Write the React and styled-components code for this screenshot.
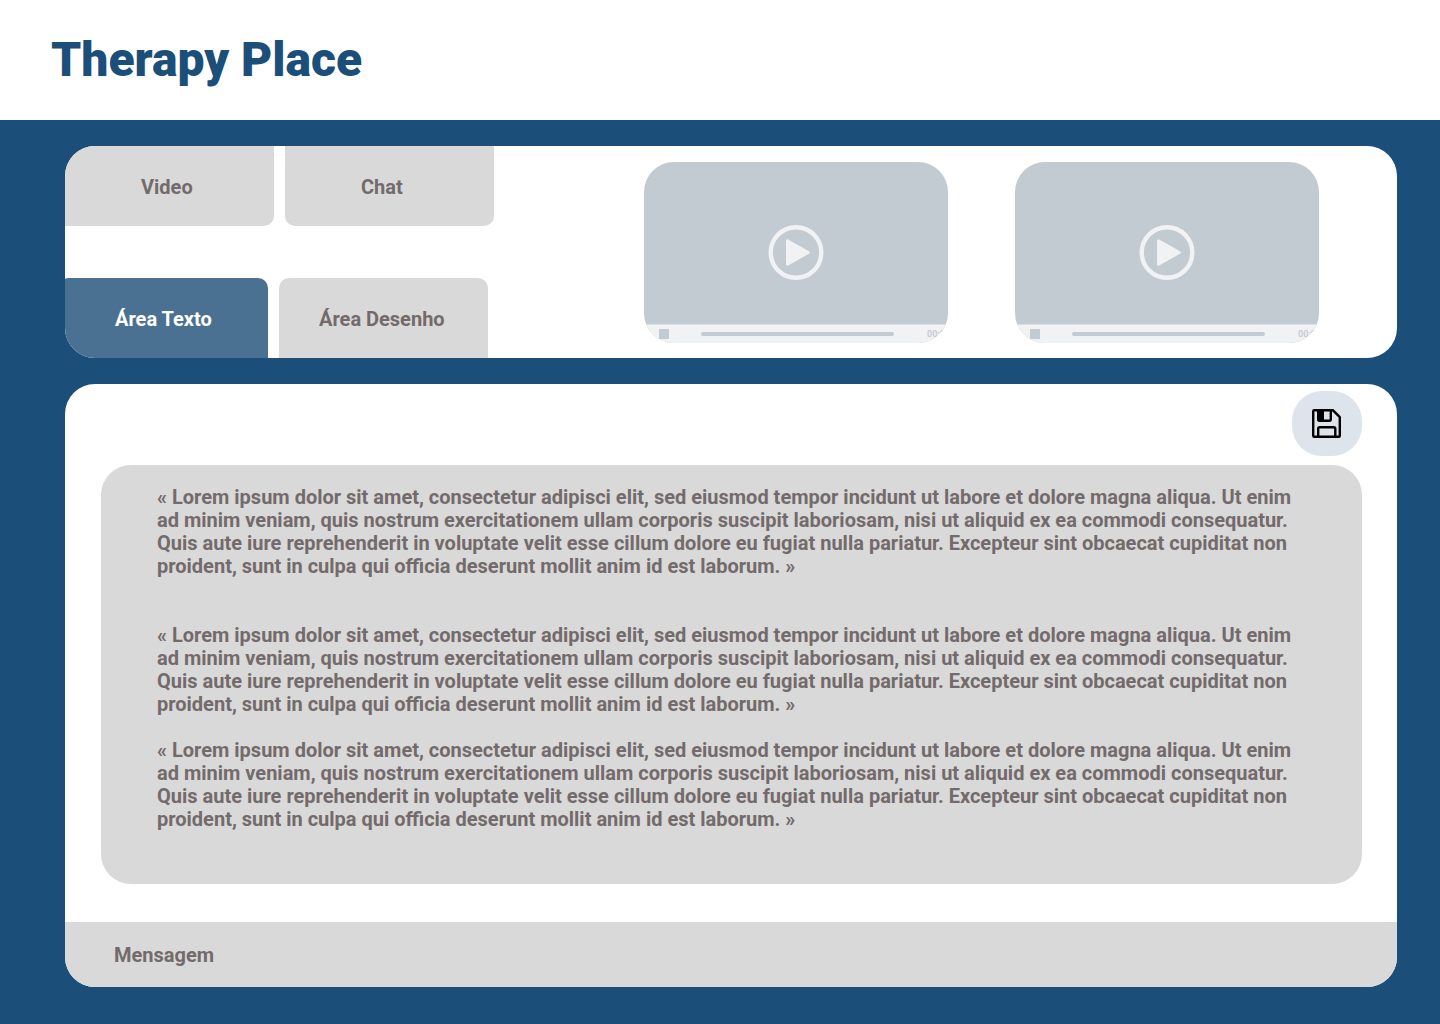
import React from 'react';
import styled, { createGlobalStyle } from 'styled-components';

const color = {
  navy: '#1b4e78',
  active: '#4a7192',
  grey: '#d9d9d9',
  ink: '#736b6b',
  media: '#c2cad2',
  mediaLight: '#f0f2f4',
  save: '#dde4ec',
};

const GlobalStyle = createGlobalStyle`
  *, *::before, *::after { box-sizing: border-box; }
  body {
    margin: 0;
    background: ${color.navy};
    color: ${color.ink};
    font: 700 20px/23px Roboto, "Liberation Sans", sans-serif;
  }
  button, input { font: inherit; color: inherit; border: 0; margin: 0; padding: 0; }
  button { cursor: pointer; }
`;

const Header = styled.header`
  display: flex;
  align-items: center;
  height: 120px;
  padding: 0 51px;
  background: #fff;
`;

const Title = styled.h1`
  margin: 0;
  font-size: 48px;
  line-height: 56px;
  font-weight: 900;
  color: ${color.navy};
`;

const Main = styled.main`
  display: flex;
  flex-direction: column;
  gap: 26px;
  padding: 26px 43px 37px 65px;
`;

const Panel = styled.section`
  background: #fff;
  border-radius: 30px;
  overflow: hidden;
`;

const SessionPanel = styled(Panel)`
  display: flex;
  justify-content: space-between;
`;

const Tabs = styled.nav`
  display: flex;
  flex-direction: column;
  justify-content: space-between;
  gap: 52px;
`;

const TabRow = styled.div`
  display: flex;
  gap: 11px;
  margin-left: ${(p) => (p.$tucked ? '-6px' : '0')};
`;

const Tab = styled.button`
  width: 209px;
  height: 80px;
  padding-left: ${(p) => p.$inset}px;
  padding-top: 2px;
  text-align: left;
  background: ${(p) => (p.$active ? color.active : color.grey)};
  color: ${(p) => (p.$active ? '#fff' : color.ink)};
  border-radius: ${(p) => (p.$side === 'top' ? '0 0 10px 10px' : '10px 10px 0 0')};

  &:first-child {
    border-bottom-left-radius: 0;
  }
`;

const Videos = styled.div`
  display: flex;
  gap: 67px;
  padding: 16px 78px 15px 0;
`;

const Player = styled.div`
  display: flex;
  flex-direction: column;
  width: 304px;
  height: 181px;
  border-radius: 30px;
  overflow: hidden;
  background: ${color.media};
`;

const PlayButton = styled.button`
  display: flex;
  flex: 1;
  align-items: center;
  justify-content: center;
  padding-top: 18px;
  background: transparent;
`;

const Controls = styled.div`
  display: flex;
  align-items: center;
  height: 19px;
  padding-left: 15px;
  border-top: 1px solid #dce0e5;
  background: ${color.mediaLight};
`;

const StopButton = styled.button`
  flex: none;
  width: 10px;
  height: 10px;
  background: ${color.media};
`;

const Track = styled.input`
  appearance: none;
  flex: none;
  width: 193px;
  height: 4px;
  margin: 0 33px 0 32px;
  border-radius: 2px;
  background: ${color.media};

  &::-webkit-slider-thumb {
    appearance: none;
    width: 0;
    height: 0;
  }
`;

const Time = styled.span`
  font-size: 9px;
  line-height: 12px;
  font-weight: 600;
  color: ${color.media};
`;

const NotesPanel = styled(Panel)`
  display: flex;
  flex-direction: column;
`;

const Toolbar = styled.div`
  display: flex;
  justify-content: flex-end;
  padding: 7px 35px 9px;
`;

const SaveButton = styled.button`
  display: flex;
  align-items: center;
  justify-content: center;
  width: 70px;
  height: 65px;
  border-radius: 30px;
  background: ${color.save};
`;

const Notes = styled.article`
  margin: 0 35px 38px 36px;
  padding: 21px 64px 53px 56px;
  border-radius: 30px;
  background: ${color.grey};
`;

const Paragraph = styled.p`
  margin: 0;

  & + & {
    margin-top: 23px;
  }

  &:first-child + & {
    margin-top: 46px;
  }
`;

const Message = styled.input`
  display: block;
  width: 100%;
  height: 65px;
  padding: 0 49px;
  background: ${color.grey};
  border-radius: 0;

  &::placeholder {
    color: ${color.ink};
    opacity: 1;
  }
`;

const lorem =
  '« Lorem ipsum dolor sit amet, consectetur adipisci elit, sed eiusmod tempor incidunt ut labore et dolore magna aliqua. Ut enim ad minim veniam, quis nostrum exercitationem ullam corporis suscipit laboriosam, nisi ut aliquid ex ea commodi consequatur. Quis aute iure reprehenderit in voluptate velit esse cillum dolore eu fugiat nulla pariatur. Excepteur sint obcaecat cupiditat non proident, sunt in culpa qui officia deserunt mollit anim id est laborum. »';

function PlayIcon() {
  return (
    <svg width="56" height="57" viewBox="0 0 56 57" fill="none" aria-hidden="true">
      <circle cx="28" cy="28.5" r="25.3" stroke={color.mediaLight} strokeWidth="4.4" />
      <path
        d="M19.500 16.800v23.400L40.200 28.500z"
        fill={color.mediaLight}
        stroke={color.mediaLight}
        strokeWidth="3"
        strokeLinejoin="round"
      />
    </svg>
  );
}

function SaveIcon() {
  return (
    <svg width="30" height="30" viewBox="0 0 30 30" fill="none" stroke="#000" strokeWidth="2.4" aria-hidden="true">
      <path d="M2.2 1.200h18.600l7 7v18.600q0 1-1 1h-24.600q-1 0-1-1v-24.600q0-1 1-1z" strokeLinejoin="round" />
      <path d="M6.200 1.500v9.300q0 .9.9.9h10.800q.9 0 .9-.9v-9.300" />
      <path d="M5.500 1h6.500v11H5.500z" fill="#000" stroke="none" />
      <path d="M6.200 28v-8.300q0-1.500 1.500-1.500h14.100q1.500 0 1.500 1.500v8.300" />
    </svg>
  );
}

function VideoPlayer({ name }) {
  return (
    <Player>
      <PlayButton type="button" aria-label={`Reproduzir ${name}`}>
        <PlayIcon />
      </PlayButton>
      <Controls>
        <StopButton type="button" aria-label={`Parar ${name}`} />
        <Track type="range" defaultValue="0" aria-label={`Progresso ${name}`} />
        <Time>00:00</Time>
      </Controls>
    </Player>
  );
}

export default function App() {
  return (
    <>
      <GlobalStyle />
      <Header>
        <Title>Therapy Place</Title>
      </Header>
      <Main>
        <SessionPanel>
          <Tabs>
            <TabRow>
              <Tab type="button" $side="top" $inset={76}>Video</Tab>
              <Tab type="button" $side="top" $inset={76}>Chat</Tab>
            </TabRow>
            <TabRow $tucked>
              <Tab type="button" $side="bottom" $inset={56} $active>Área Texto</Tab>
              <Tab type="button" $side="bottom" $inset={40}>Área Desenho</Tab>
            </TabRow>
          </Tabs>
          <Videos>
            <VideoPlayer name="vídeo 1" />
            <VideoPlayer name="vídeo 2" />
          </Videos>
        </SessionPanel>
        <NotesPanel>
          <Toolbar>
            <SaveButton type="button" aria-label="Guardar">
              <SaveIcon />
            </SaveButton>
          </Toolbar>
          <Notes>
            <Paragraph>{lorem}</Paragraph>
            <Paragraph>{lorem}</Paragraph>
            <Paragraph>{lorem}</Paragraph>
          </Notes>
          <Message type="text" placeholder="Mensagem" aria-label="Mensagem" />
        </NotesPanel>
      </Main>
    </>
  );
}
